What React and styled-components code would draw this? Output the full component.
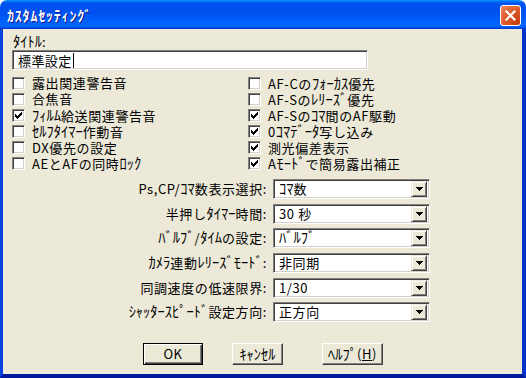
import React from "react";
import styled, { createGlobalStyle } from "styled-components";

const Global = createGlobalStyle`
  html, body { margin: 0; padding: 0; background: #ffffff; }
  body { width: 526px; height: 378px; overflow: hidden; }
  * { box-sizing: border-box; }
`;

const FONT = `"Noto Sans CJK JP", "MS UI Gothic", sans-serif`;

const Window = styled.div`
  width: 526px;
  height: 378px;
  display: flex;
  flex-direction: column;
  font-family: ${FONT};
  font-size: 13px;
  letter-spacing: 0.6px;
  color: #000;
`;

const TitleBar = styled.div`
  height: 29px;
  flex: none;
  display: flex;
  align-items: center;
  justify-content: space-between;
  padding: 0 5px 0 7px;
  border-radius: 7px 7px 0 0;
  background: linear-gradient(
    to bottom,
    #0997ff 0%,
    #0053ee 10%,
    #0050ee 40%,
    #0066ff 86%,
    #005bff 93%,
    #003dd7 97%,
    #003dd7 100%
  );
`;

const TitleText = styled.span`
  color: #fff;
  font-weight: 700;
  font-size: 14px;
  letter-spacing: 0.8px;
  line-height: 16px;
  text-shadow: 1px 1px #0f1089;
`;

const CloseButton = styled.div`
  width: 21px;
  height: 21px;
  border: 1px solid #fff;
  border-radius: 3px;
  background: radial-gradient(circle at 85% 85%, #c43d10 0%, #e05a2a 55%, #ea8a68 100%);
  display: flex;
  align-items: center;
  justify-content: center;
  margin-top: 1px;
`;

const Body = styled.div`
  flex: 1;
  background: #ece9d8;
  border-left: 3px solid #0843e0;
  border-right: 4px solid #0733c9;
  border-bottom: 4px solid #00199d;
  padding: 5px 0 0 9px;
  display: flex;
  flex-direction: column;
`;

const Kana = styled.span`
  font-size: 14.5px;
  letter-spacing: 0;
  line-height: 1;
`;

const FieldLabel = styled.div`
  height: 14px;
  line-height: 14px;
  margin-left: 1px;
`;

const Sunken = styled.div`
  background: #fff;
  border: 1px solid;
  border-color: #808080 #ffffff #ffffff #808080;
  box-shadow: inset 1px 1px #404040, inset -1px -1px #d4d0c8;
`;

const TextInput = styled(Sunken)`
  margin-top: 2px;
  width: 356px;
  height: 20px;
  padding: 0 0 0 5px;
  display: flex;
  align-items: center;
  letter-spacing: 0.4px;
  font-size: 13px;
`;

const Caret = styled.span`
  display: inline-block;
  width: 1px;
  height: 15px;
  background: #000;
  margin-left: 1px;
`;

const CheckGrid = styled.div`
  margin-top: 5px;
  display: grid;
  grid-template-columns: 236px 1fr;
  grid-auto-flow: column;
  grid-template-rows: repeat(6, 16.2px);
`;

const CheckRow = styled.div`
  display: flex;
  align-items: center;
  gap: 7px;
  white-space: nowrap;
  line-height: 14px;
  height: 16px;
`;

const Box = styled(Sunken)`
  width: 13px;
  height: 13px;
  flex: none;
  position: relative;
`;

const Tick = styled.svg`
  position: absolute;
  left: 2px;
  top: 2px;
`;

const SelectGrid = styled.div`
  margin-top: 7px;
  display: grid;
  grid-template-columns: 255px 157px;
  column-gap: 6px;
  row-gap: 4.6px;
  grid-auto-rows: 20px;
`;

const SelectLabel = styled.div`
  text-align: right;
  line-height: 20px;
  white-space: nowrap;
`;

const Combo = styled(Sunken)`
  height: 20px;
  display: flex;
  align-items: center;
  justify-content: space-between;
  padding: 0 2px 0 5px;
  white-space: nowrap;
  line-height: 16px;
`;

const ComboButton = styled.div`
  width: 16px;
  height: 16px;
  background: #ece9d8;
  border: 1px solid;
  border-color: #ece9d8 #404040 #404040 #ece9d8;
  box-shadow: inset 1px 1px #fff, inset -1px -1px #808080;
  display: flex;
  align-items: center;
  justify-content: center;
`;

const ButtonRow = styled.div`
  margin-top: 21px;
  margin-left: 131px;
  display: flex;
  align-items: center;
`;

const Button = styled.div`
  width: ${(p) => p.$w}px;
  height: 22px;
  margin-left: ${(p) => p.$ml || 0}px;
  display: flex;
  align-items: center;
  justify-content: center;
  background: #ece9d8;
  border: 1px solid;
  border-color: ${(p) => (p.$default ? "#000" : "#fff #404040 #404040 #fff")};
  box-shadow: ${(p) =>
    p.$default
      ? "inset 1px 1px #fff, inset -1px -1px #404040, inset -2px -2px #808080"
      : "inset -1px -1px #808080"};
  line-height: 14px;
  white-space: nowrap;
`;

const U = styled.span`
  text-decoration: underline;
`;

// wrap runs of half-width katakana so they render at bitmap-like height
function T({ children }) {
  const parts = String(children).split(/([\uFF61-\uFF9F]+)/);
  return (
    <span>
      {parts.map((p, i) =>
        /[\uFF61-\uFF9F]/.test(p) ? <Kana key={i}>{p}</Kana> : <React.Fragment key={i}>{p}</React.Fragment>
      )}
    </span>
  );
}

function Check({ checked }) {
  return (
    <Box>
      {checked && (
        <Tick width="7" height="7" viewBox="0 0 7 7" shapeRendering="crispEdges">
          <rect x="0" y="2" width="1" height="3" fill="#000" />
          <rect x="1" y="3" width="1" height="3" fill="#000" />
          <rect x="2" y="4" width="1" height="3" fill="#000" />
          <rect x="3" y="3" width="1" height="3" fill="#000" />
          <rect x="4" y="2" width="1" height="3" fill="#000" />
          <rect x="5" y="1" width="1" height="3" fill="#000" />
          <rect x="6" y="0" width="1" height="3" fill="#000" />
        </Tick>
      )}
    </Box>
  );
}

const checks = [
  ["露出関連警告音", false],
  ["合焦音", false],
  ["ﾌｨﾙﾑ給送関連警告音", true],
  ["ｾﾙﾌﾀｲﾏｰ作動音", false],
  ["DX優先の設定", false],
  ["AEとAFの同時ﾛｯｸ", false],
  ["AF-Cのﾌｫｰｶｽ優先", false],
  ["AF-Sのﾚﾘｰｽﾞ優先", false],
  ["AF-Sのｺﾏ間のAF駆動", true],
  ["0ｺﾏﾃﾞｰﾀ写し込み", true],
  ["測光偏差表示", true],
  ["Aﾓｰﾄﾞで簡易露出補正", true],
];

const selects = [
  ["Ps,CP/ｺﾏ数表示選択:", "ｺﾏ数"],
  ["半押しﾀｲﾏｰ時間:", "30 秒"],
  ["ﾊﾞﾙﾌﾞ/ﾀｲﾑの設定:", "ﾊﾞﾙﾌﾞ"],
  ["ｶﾒﾗ連動ﾚﾘｰｽﾞﾓｰﾄﾞ:", "非同期"],
  ["同調速度の低速限界:", "1/30"],
  ["ｼｬｯﾀｰｽﾋﾟｰﾄﾞ設定方向:", "正方向"],
];

export default function App() {
  return (
    <>
      <Global />
      <Window>
        <TitleBar>
          <TitleText>ｶｽﾀﾑｾｯﾃｨﾝｸﾞ</TitleText>
          <CloseButton>
            <svg width="11" height="11" viewBox="0 0 11 11">
              <path d="M1.5 1.5 L9.5 9.5 M9.5 1.5 L1.5 9.5" stroke="#fff" strokeWidth="2.2" strokeLinecap="square" />
            </svg>
          </CloseButton>
        </TitleBar>
        <Body>
          <FieldLabel>
            <T>ﾀｲﾄﾙ:</T>
          </FieldLabel>
          <TextInput>
            標準設定
            <Caret />
          </TextInput>
          <CheckGrid>
            {checks.map(([label, on]) => (
              <CheckRow key={label}>
                <Check checked={on} />
                <T>{label}</T>
              </CheckRow>
            ))}
          </CheckGrid>
          <SelectGrid>
            {selects.map(([label, value]) => (
              <React.Fragment key={label}>
                <SelectLabel>
                  <T>{label}</T>
                </SelectLabel>
                <Combo>
                  <T>{value}</T>
                  <ComboButton>
                    <svg width="7" height="4" viewBox="0 0 7 4" shapeRendering="crispEdges">
                      <path d="M0 0 H7 L3.5 4 Z" fill="#000" />
                    </svg>
                  </ComboButton>
                </Combo>
              </React.Fragment>
            ))}
          </SelectGrid>
          <ButtonRow>
            <Button $w={60} $default>OK</Button>
            <Button $w={51} $ml={29}>
              <T>ｷｬﾝｾﾙ</T>
            </Button>
            <Button $w={61} $ml={39}>
              <Kana>ﾍﾙﾌﾟ</Kana>(<U>H</U>)
            </Button>
          </ButtonRow>
        </Body>
      </Window>
    </>
  );
}
